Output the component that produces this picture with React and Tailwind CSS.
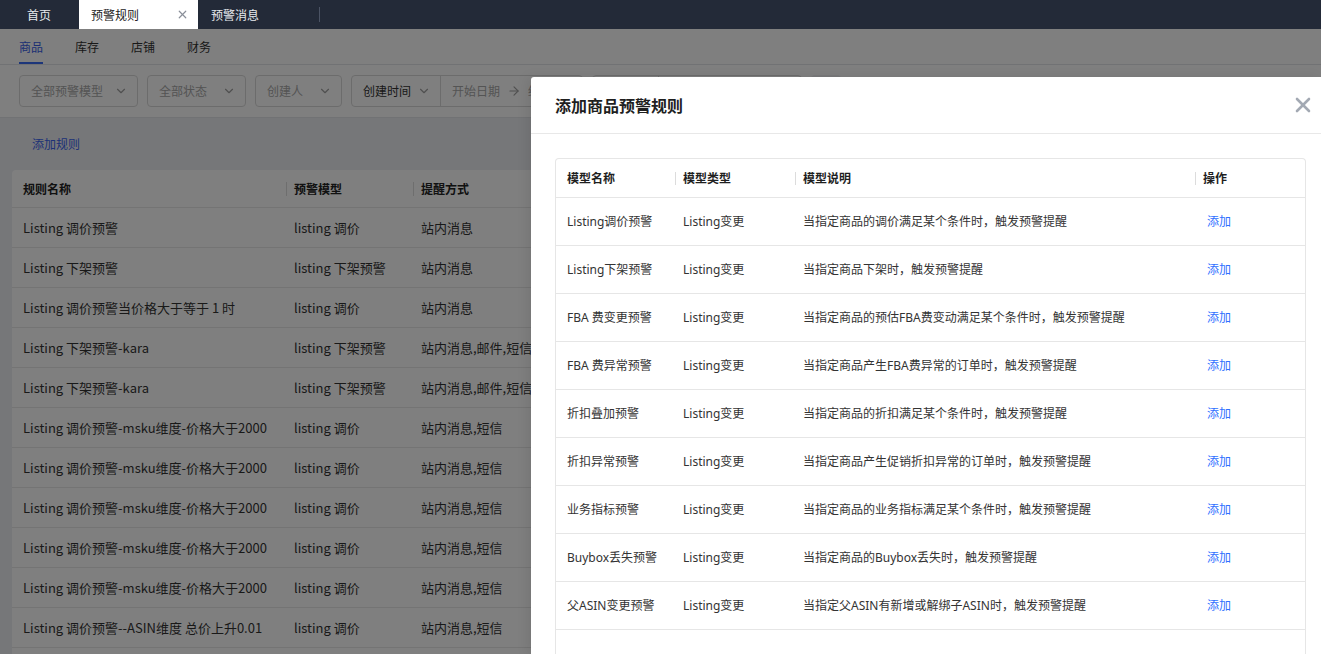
import React from 'react';
import { ChevronDown, ArrowRight, X } from 'lucide-react';

const rules = [
  ['Listing 调价预警', 'listing 调价', '站内消息'],
  ['Listing 下架预警', 'listing 下架预警', '站内消息'],
  ['Listing 调价预警当价格大于等于 1 时', 'listing 调价', '站内消息'],
  ['Listing 下架预警-kara', 'listing 下架预警', '站内消息,邮件,短信'],
  ['Listing 下架预警-kara', 'listing 下架预警', '站内消息,邮件,短信'],
  ['Listing 调价预警-msku维度-价格大于2000', 'listing 调价', '站内消息,短信'],
  ['Listing 调价预警-msku维度-价格大于2000', 'listing 调价', '站内消息,短信'],
  ['Listing 调价预警-msku维度-价格大于2000', 'listing 调价', '站内消息,短信'],
  ['Listing 调价预警-msku维度-价格大于2000', 'listing 调价', '站内消息,短信'],
  ['Listing 调价预警-msku维度-价格大于2000', 'listing 调价', '站内消息,短信'],
  ['Listing 调价预警--ASIN维度 总价上升0.01', 'listing 调价', '站内消息,短信'],
];

const models = [
  ['Listing调价预警', 'Listing变更', '当指定商品的调价满足某个条件时，触发预警提醒'],
  ['Listing下架预警', 'Listing变更', '当指定商品下架时，触发预警提醒'],
  ['FBA 费变更预警', 'Listing变更', '当指定商品的预估FBA费变动满足某个条件时，触发预警提醒'],
  ['FBA 费异常预警', 'Listing变更', '当指定商品产生FBA费异常的订单时，触发预警提醒'],
  ['折扣叠加预警', 'Listing变更', '当指定商品的折扣满足某个条件时，触发预警提醒'],
  ['折扣异常预警', 'Listing变更', '当指定商品产生促销折扣异常的订单时，触发预警提醒'],
  ['业务指标预警', 'Listing变更', '当指定商品的业务指标满足某个条件时，触发预警提醒'],
  ['Buybox丢失预警', 'Listing变更', '当指定商品的Buybox丢失时，触发预警提醒'],
  ['父ASIN变更预警', 'Listing变更', '当指定父ASIN有新增或解绑子ASIN时，触发预警提醒'],
];

function Select({ className, label }) {
  return (
    <div className={`flex h-[32px] items-center justify-between rounded-[4px] border border-[#d9d9d9] pl-[11px] pr-[9px] text-[#a8a8a8] ${className}`}>
      <span>{label}</span>
      <ChevronDown size={14} strokeWidth={2} className="text-[#a0a0a0]" />
    </div>
  );
}

function Divider({ className = 'h-[14px]' }) {
  return <span className={`mr-[7px] w-px bg-[#dcdcdc] ${className}`} />;
}

export default function App() {
  return (
    <div className="relative h-[654px] w-[1321px] overflow-hidden bg-[#eceef2] font-['Noto_Sans_CJK_SC',sans-serif] text-[#333]">
      {/* top nav */}
      <div className="flex h-[29px] items-stretch bg-[#232a38] text-[12px]">
        <div className="flex items-center pl-[27px] pr-[28px] text-[#e8eaee]">首页</div>
        <div className="flex w-[119px] items-center justify-between bg-white pl-[12px] pr-[9px] text-[#222]">
          <span>预警规则</span>
          <X size={13} strokeWidth={2.2} className="text-[#8a8f99]" />
        </div>
        <div className="flex items-center pl-[13px] text-[#e8eaee]">预警消息</div>
        <div className="ml-[60px] h-[15px] w-px self-center bg-[#4b5364]" />
      </div>

      {/* sub tabs */}
      <div className="flex h-[36px] items-stretch gap-[32px] border-b border-[#e3e5e8] bg-white px-[19px] text-[12px]">
        <div className="flex items-center border-b-2 border-[#3a6cf4] pt-[2px] text-[#3a5ee8]">商品</div>
        <div className="flex items-center">库存</div>
        <div className="flex items-center">店铺</div>
        <div className="flex items-center">财务</div>
      </div>

      {/* filters */}
      <div className="flex h-[53px] items-center gap-[9px] border-b border-[#e3e5e8] bg-white px-[19px] text-[12px]">
        <Select className="w-[119px]" label="全部预警模型" />
        <Select className="w-[99px]" label="全部状态" />
        <Select className="w-[87px]" label="创建人" />
        <div className="flex h-[32px] w-[232px] items-center rounded-[4px] border border-[#d9d9d9]">
          <div className="flex h-full w-[89px] items-center justify-between border-r border-[#d9d9d9] pl-[11px] pr-[9px] text-[#333]">
            <span>创建时间</span>
            <ChevronDown size={14} strokeWidth={2} className="text-[#a0a0a0]" />
          </div>
          <div className="flex items-center gap-[7px] pl-[11px] text-[#a8a8a8]">
            <span>开始日期</span>
            <ArrowRight size={14} strokeWidth={2} className="text-[#a0a0a0]" />
            <span>结束日期</span>
          </div>
        </div>
        <div className="flex h-[32px] w-[210px] items-center rounded-[4px] border border-[#d9d9d9]">
          <div className="h-full w-[66px] border-r border-[#d9d9d9]" />
        </div>
        <div className="h-[32px] w-[30px] rounded-[4px] bg-[#f2f3f5]" />
      </div>

      {/* list area */}
      <div className="px-[12px]">
        <div className="flex h-[52px] items-center pl-[20px] text-[12px] text-[#3a63ef]">添加规则</div>
        <div className="rounded-t-[4px] bg-white">
          <div className="flex h-[38px] items-center border-b border-[#e8e8e8] text-[12px] font-bold text-[#222]">
            <div className="w-[274px] pl-[11px]">规则名称</div>
            <div className="flex w-[127px] items-center"><Divider />预警模型</div>
            <div className="flex flex-1 items-center"><Divider />提醒方式</div>
          </div>
          {rules.map((r, i) => (
            <div key={i} className="flex h-[40px] items-center border-b border-[#e8e8e8] text-[13px]">
              <div className="w-[274px] pl-[11px]">{r[0]}</div>
              <div className="w-[127px] pl-[8px]">{r[1]}</div>
              <div className="flex-1 pl-[8px]">{r[2]}</div>
            </div>
          ))}
          <div className="h-[40px]" />
        </div>
      </div>

      {/* mask */}
      <div className="absolute bottom-0 left-0 right-0 top-[29px] bg-black/50" />

      {/* drawer */}
      <div className="absolute bottom-0 left-[531px] right-0 top-[77px] flex flex-col rounded-tl-[3px] bg-white shadow-[-4px_0_12px_rgba(0,0,0,0.08)]">
        <div className="flex h-[57px] shrink-0 items-center justify-between border-b border-[#e8e8e8] pl-[24px] pr-[6px]">
          <span className="text-[16px] font-bold text-[#1f1f1f]">添加商品预警规则</span>
          <X size={24} strokeWidth={2.6} className="text-[#a3a9b3]" />
        </div>
        <div className="flex flex-1 flex-col pl-[24px] pr-[15px] pt-[24px]">
          <div className="flex-1 rounded-t-[4px] border border-b-0 border-[#e6e6e6]">
            <div className="flex h-[39px] items-center border-b border-[#e6e6e6] text-[12px] font-bold text-[#1f1f1f]">
              <div className="w-[119px] pl-[11px]">模型名称</div>
              <div className="flex w-[120px] items-center"><Divider className="h-[13px]" />模型类型</div>
              <div className="flex w-[400px] items-center"><Divider className="h-[13px]" />模型说明</div>
              <div className="flex flex-1 items-center"><Divider className="h-[13px]" />操作</div>
            </div>
            {models.map((m, i) => (
              <div key={i} className="flex h-[48px] items-center border-b border-[#e6e6e6] font-['Noto_Sans','Noto_Sans_CJK_SC',sans-serif] text-[12px] text-[#333]">
                <div className="w-[119px] pl-[11px]">{m[0]}</div>
                <div className="w-[120px] pl-[8px]">{m[1]}</div>
                <div className="w-[400px] pl-[8px]">{m[2]}</div>
                <div className="flex-1 pl-[12px] text-[#2f6fff]">添加</div>
              </div>
            ))}
          </div>
        </div>
      </div>
    </div>
  );
}
